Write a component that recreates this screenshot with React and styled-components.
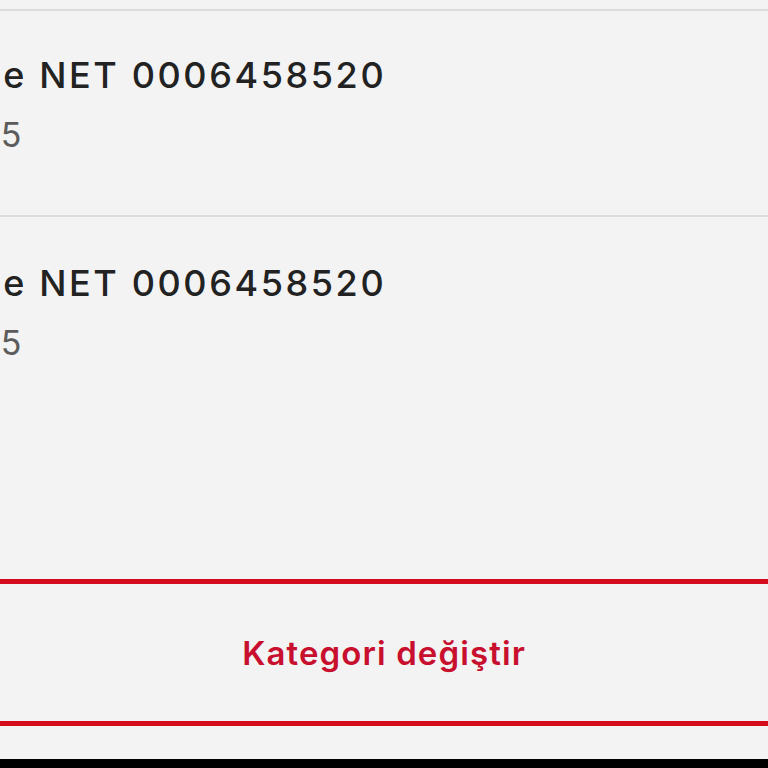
import React from "react";
import styled, { createGlobalStyle } from "styled-components";

const GlobalStyle = createGlobalStyle`
  html, body {
    margin: 0;
    padding: 0;
    background: #f3f3f3;
    overflow: hidden;
  }
  * { box-sizing: border-box; }
`;

const Page = styled.div`
  height: 768px;
  display: flex;
  flex-direction: column;
  font-family: "Inter", "Noto Sans", sans-serif;
  background: #f3f3f3;
  overflow: hidden;
`;

const List = styled.div`
  margin-top: 9px;
  border-top: 2px solid #dcdcdc;
  display: flex;
  flex-direction: column;
`;

const Item = styled.div`
  height: ${(p) => (p.$last ? 204 : 206)}px;
  border-bottom: ${(p) => (p.$last ? "none" : "2px solid #dcdcdc")};
  display: flex;
  flex-direction: column;
  padding-top: ${(p) => (p.$last ? 45 : 43)}px;
  margin-left: -21px;
  gap: 19px;
`;

const Title = styled.div`
  font-size: 36px;
  font-weight: 500;
  line-height: 42px;
  letter-spacing: 2.6px;
  color: #222222;
  white-space: nowrap;
`;

const Sub = styled.div`
  font-size: 34px;
  font-weight: 400;
  line-height: 40px;
  letter-spacing: 1px;
  color: #5c5c5c;
  white-space: nowrap;
`;

const Spacer = styled.div`
  flex: 1;
`;

const ActionButton = styled.button`
  height: 147px;
  width: 100%;
  background: #f3f3f3;
  border: none;
  border-top: 5px solid #d40c1e;
  border-bottom: 5px solid #d40c1e;
  color: #c8102e;
  font-family: inherit;
  font-size: 33px;
  font-weight: 600;
  letter-spacing: 1.1px;
  display: flex;
  align-items: center;
  justify-content: center;
  padding: 0;
  margin-bottom: 33px;
`;

const BottomBar = styled.div`
  height: 9px;
  background: #000;
  flex-shrink: 0;
`;

const items = [
  { title: "ne NET 0006458520", sub: "25" },
  { title: "ne NET 0006458520", sub: "25" },
];

export default function App() {
  return (
    <>
      <GlobalStyle />
      <Page>
        <List>
          {items.map((it, i) => (
            <Item key={i} $last={i === items.length - 1}>
              <Title>{it.title}</Title>
              <Sub>{it.sub}</Sub>
            </Item>
          ))}
        </List>
        <Spacer />
        <ActionButton>Kategori değiştir</ActionButton>
        <BottomBar />
      </Page>
    </>
  );
}
